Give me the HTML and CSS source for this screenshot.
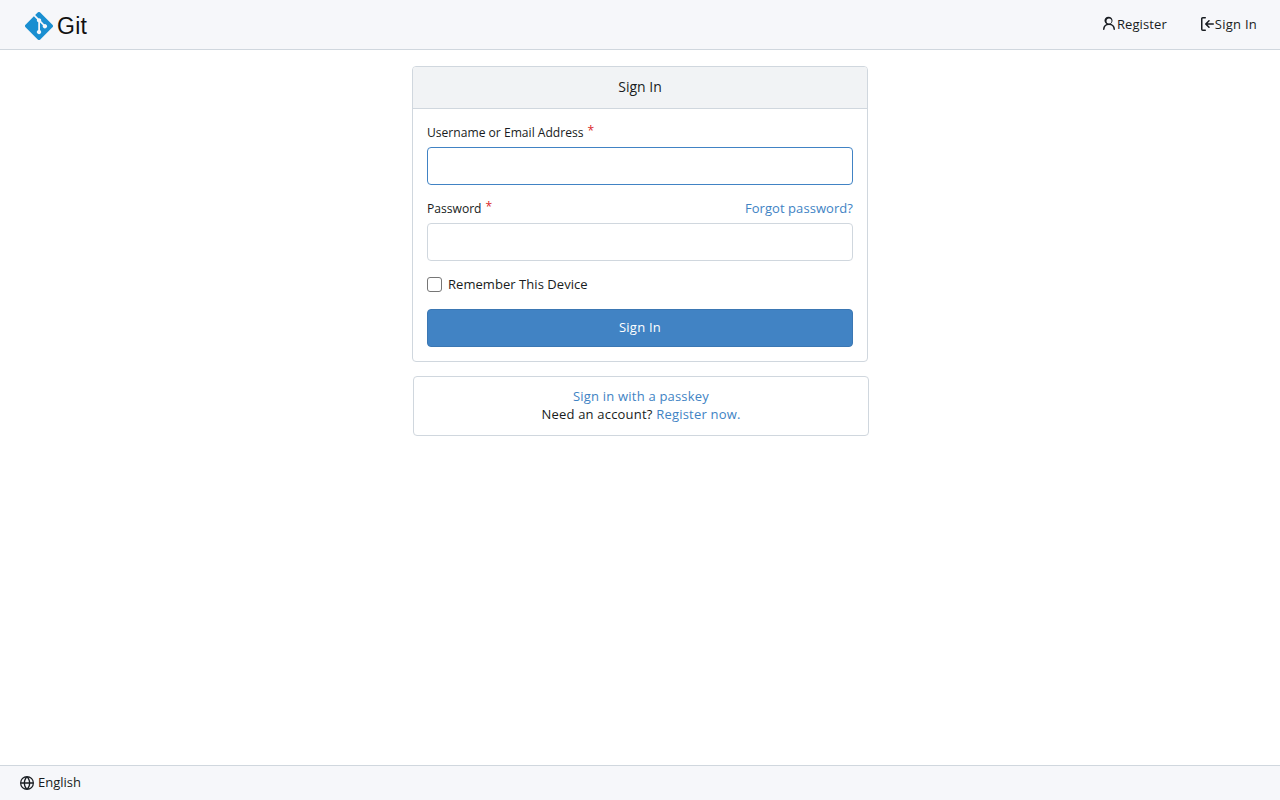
FILE: index.html
```html
<!DOCTYPE html>
<html lang="en">
<head>
<meta charset="utf-8">
<title>Sign In - Git</title>
<link rel="stylesheet" href="styles.css">
</head>
<body>
<nav class="navbar">
  <a class="brand" href="#">
    <svg class="logo" viewBox="0 0 92 92" width="28" height="28"><path fill="#1a8fd1" d="M90.156 41.965 50.036 1.848a5.918 5.918 0 0 0-8.372 0l-8.328 8.332 10.566 10.566a7.03 7.03 0 0 1 7.23 1.684 7.034 7.034 0 0 1 1.669 7.277l10.187 10.184a7.028 7.028 0 0 1 7.278 1.672 7.04 7.04 0 0 1 0 9.957 7.05 7.05 0 0 1-9.965 0 7.044 7.044 0 0 1-1.528-7.66l-9.5-9.497V59.36a7.04 7.04 0 0 1 1.86 11.29 7.04 7.04 0 0 1-9.957 0 7.04 7.04 0 0 1 0-9.958 7.06 7.06 0 0 1 2.304-1.539V33.926a7.049 7.049 0 0 1-3.82-9.234L29.242 14.272 1.73 41.777a5.925 5.925 0 0 0 0 8.371L41.852 90.27a5.925 5.925 0 0 0 8.37 0l39.934-39.934a5.925 5.925 0 0 0 0-8.371"/></svg>
    <span class="brand-name">Git</span>
  </a>
  <div class="nav-right">
    <a class="nav-item nav-register" href="#">
      <svg class="icon" viewBox="0 0 16 16" width="16" height="16"><path d="M10.561 8.073a6.005 6.005 0 0 1 3.432 5.142.75.75 0 1 1-1.498.07 4.5 4.5 0 0 0-8.99 0 .75.75 0 1 1-1.498-.07 6.004 6.004 0 0 1 3.431-5.142 3.999 3.999 0 1 1 4.123 0ZM10.5 5a2.5 2.5 0 1 0-5 0 2.5 2.5 0 0 0 5 0Z"/></svg>
      <span>Register</span>
    </a>
    <a class="nav-item" href="#">
      <svg class="icon" viewBox="0 0 16 16" width="16" height="16"><path d="M2 2.75C2 1.784 2.784 1 3.75 1h2.5a.75.75 0 0 1 0 1.5h-2.5a.25.25 0 0 0-.25.25v10.5c0 .138.112.25.25.25h2.5a.75.75 0 0 1 0 1.5h-2.5A1.75 1.75 0 0 1 2 13.25Zm6.56 4.5h5.69a.75.75 0 0 1 0 1.5H8.56l1.97 1.97a.749.749 0 0 1-.326 1.275.749.749 0 0 1-.734-.215L6.22 8.53a.75.75 0 0 1 0-1.06l3.25-3.25a.749.749 0 0 1 1.275.326.749.749 0 0 1-.215.734Z"/></svg>
      <span>Sign In</span>
    </a>
  </div>
</nav>
<main class="main">
  <div class="column">
    <form class="card">
      <h4 class="card-head">Sign In</h4>
      <div class="card-body">
        <div class="field">
          <label class="label" for="user">Username or Email Address<span class="req">*</span></label>
          <input class="input input-focus" id="user" type="text">
        </div>
        <div class="field">
          <div class="label-row">
            <label class="label" for="pass">Password<span class="req">*</span></label>
            <a class="link link-small" href="#">Forgot password?</a>
          </div>
          <input class="input" id="pass" type="password">
        </div>
        <label class="check"><span class="box"></span>Remember This Device</label>
        <button class="btn" type="button">Sign In</button>
      </div>
    </form>
    <div class="card-alt">
      <a class="link" href="#">Sign in with a passkey</a>
      <div>Need an account? <a class="link" href="#">Register now.</a></div>
    </div>
  </div>
</main>
<footer class="footer">
  <svg class="icon" viewBox="0 0 16 16" width="14" height="14"><path d="M8 0a8 8 0 1 1 0 16A8 8 0 0 1 8 0ZM5.78 8.75a9.64 9.64 0 0 0 1.363 4.177c.255.426.542.832.857 1.215.245-.296.551-.705.857-1.215A9.64 9.64 0 0 0 10.22 8.75Zm4.44-1.5a9.64 9.64 0 0 0-1.363-4.177c-.307-.51-.612-.919-.857-1.215a9.927 9.927 0 0 0-.857 1.215A9.64 9.64 0 0 0 5.78 7.25Zm-5.944 1.5H1.543a6.507 6.507 0 0 0 4.666 5.5c-.123-.181-.24-.365-.352-.552-.715-1.192-1.437-2.874-1.581-4.948Zm-2.733-1.5h2.733c.144-2.074.866-3.756 1.58-4.948.12-.197.237-.381.353-.552a6.507 6.507 0 0 0-4.666 5.5Zm10.181 1.5c-.144 2.074-.866 3.756-1.58 4.948-.12.197-.237.381-.353.552a6.507 6.507 0 0 0 4.666-5.5Zm2.733-1.5a6.507 6.507 0 0 0-4.666-5.5c.123.181.24.365.353.552.714 1.192 1.436 2.874 1.58 4.948Z"/></svg>
  <span class="footer-text">English</span>
</footer>
</body>
</html>
```
FILE: styles.css
```css
* { box-sizing: border-box; }
html, body { height: 100%; }
body {
  margin: 0;
  display: flex;
  flex-direction: column;
  font-family: "Open Sans", "Liberation Sans", sans-serif;
  font-size: 13px;
  line-height: 18px;
  color: #181c21;
  background: #fff;
}
a { text-decoration: none; color: inherit; }
.navbar {
  height: 50px;
  flex: none;
  display: flex;
  align-items: center;
  justify-content: space-between;
  padding: 0 7px 0 25px;
  background: #f6f7fa;
  border-bottom: 1px solid #d0d7de;
}
.brand { display: flex; align-items: center; gap: 4px; margin-top: 2px; }
.logo { display: block; }
.brand-name { font-family: "Liberation Sans", sans-serif; font-size: 23px; line-height: 30px; letter-spacing: 0.3px; color: #111; }
.nav-right { display: flex; margin-bottom: 1px; }
.nav-item { display: flex; align-items: center; padding: 0 16px; color: #181c21; height: 36px; letter-spacing: 0.25px; }
.nav-register { letter-spacing: 0.1px; }
.icon { fill: currentColor; display: block; }
.main { flex: 1; padding-top: 16px; display: flex; justify-content: center; }
.column { width: 456px; }
.card { display: block; border: 1px solid #d0d7de; border-radius: 4px; background: #fff; }
.card-head {
  margin: 0;
  height: 42px;
  padding-bottom: 2px;
  display: flex;
  align-items: center;
  justify-content: center;
  font-size: 14px;
  font-weight: 400;
  background: #f1f3f5;
  border-bottom: 1px solid #d0d7de;
  border-radius: 3px 3px 0 0;
}
.card-body { padding: 14px; }
.field { margin-bottom: 14px; }
.label { display: block; font-size: 12.1px; line-height: 18px; padding-top: 1px; height: 18px; margin-bottom: 6px; }
.req { color: #db2828; margin-left: 4px; position: relative; top: -2px; }
.label-row { display: flex; justify-content: space-between; }
.link { color: #4183c4; }
.link-small { letter-spacing: 0.06px; }
.input {
  display: block;
  width: 100%;
  height: 38px;
  border: 1px solid #d0d7de;
  border-radius: 4px;
  background: #fff;
  outline: none;
  padding: 0 14px;
}
.input-focus { border-color: #4183c4; }
.check { display: flex; align-items: center; gap: 6px; height: 18px; margin-bottom: 16px; letter-spacing: 0.05px; }
.box { width: 15px; height: 15px; border: 1px solid #767676; border-radius: 3px; background: #fff; flex: none; }
.btn {
  display: block;
  width: 100%;
  height: 38px;
  padding: 0 0 2px;
  font: inherit;
  letter-spacing: 0.25px;
  color: #fff;
  background: #4183c4;
  border: 1px solid #3b77b3;
  border-radius: 4px;
}
.card-alt {
  margin: 14px -1px 0 1px;
  height: 60px;
  padding: 10px 14px 0;
  border: 1px solid #d0d7de;
  border-radius: 4px;
  text-align: center;
  letter-spacing: 0.2px;
}
.footer {
  flex: none;
  height: 35px;
  display: flex;
  align-items: center;
  gap: 4px;
  padding-left: 20px;
  background: #f6f7fa;
  border-top: 1px solid #d0d7de;
}
.footer-text { margin-bottom: 2px; }
```
